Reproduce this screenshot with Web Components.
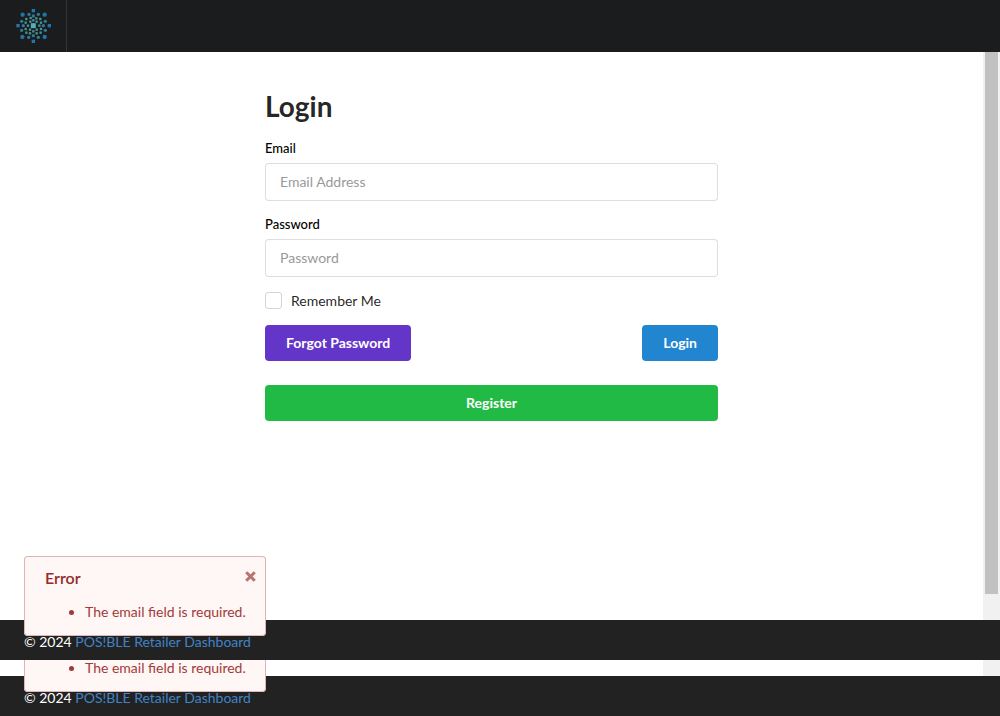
<!DOCTYPE html>
<html lang="en">
<head>
<meta charset="utf-8">
<meta name="viewport" content="width=device-width, initial-scale=1">
<title>Login</title>
<style>
  body { margin: 0; background: #fff; color: rgba(0,0,0,.87); font: 14px/20px Lato, "Liberation Sans", sans-serif; }
</style>
</head>
<body>
<dashboard-page></dashboard-page>
<script>
const define = (name, html, setup) => customElements.define(name, class extends HTMLElement {
  constructor() {
    super();
    const root = this.attachShadow({ mode: 'open' });
    const template = document.createElement('template');
    template.innerHTML = html;
    root.append(template.content.cloneNode(true));
  }
  connectedCallback() { if (setup) setup(this, this.shadowRoot); }
});

// Rings of dots around the central square: [x, y, size, colour, rounded]
const dots = [
  [100,77,15,'#55acbd'],
  ...[[100,32],[100,124],[54,77],[148,77]].map(p => [...p,10,'#2076a8']),
  ...[[68,44],[134,44],[67,111],[134,111]].map(p => [...p,13,'#2174a3','r']),
  ...[[87,43],[115,43],[65,64],[136,64],[65,91],[136,91],[86,112],[115,112],[100,48],[100,107],[70,77],[130,77]].map(p => [...p,10,'#2f7c99','r']),
  ...[[79,57],[121,57],[92,54],[109,55],[77,68],[123,68],[77,87],[123,87],[79,98],[122,98],[91,65],[110,65],[90,100],[110,100],[100,61],[100,94],[84,77],[118,77],[90,89],[110,89]].map(p => [...p,7,'#429599'])
].map(([x,y,s,c,r]) => `<rect x="${x-s/2}" y="${y-s/2}" width="${s}" height="${s}" fill="${c}"${r ? ` rx="${s/2}"` : ''}/>`).join('');

define('top-bar', `
<style>
  :host { display: block; background: #1b1c1d; }
  nav { display: flex; min-height: 52px; }
  a { display: flex; align-items: center; padding: 0 13px; border-right: 1px solid #323334; }
  svg { display: block; width: 40px; height: 40px; }
</style>
<nav><a href="#" aria-label="Home"><svg viewBox="39 18 120 120" aria-hidden="true">${dots}</svg></a></nav>`);

define('text-field', `
<style>
  :host { display: block; }
  label { display: block; margin-bottom: 6px; font-size: 13px; line-height: 18px; font-weight: 500; color: #000; }
  input { display: block; box-sizing: border-box; width: 100%; height: 38px; margin: 0; padding: 0 14px 2px;
    border: 1px solid rgba(34,36,38,.15); border-radius: 4px; background: #fff; color: inherit; font: inherit; outline: none; }
  input:focus { border-color: #85b7d9; }
  input::placeholder { color: #999; opacity: 1; }
</style>
<label for="field"></label><input id="field">`, (el, root) => {
  root.querySelector('label').textContent = el.getAttribute('label');
  const input = root.querySelector('input');
  input.type = el.getAttribute('type');
  input.placeholder = el.getAttribute('placeholder');
});

define('check-field', `
<style>
  :host { display: block; }
  label { display: flex; align-items: flex-start; gap: 9px; }
  input { appearance: none; box-sizing: border-box; width: 17px; height: 17px; margin: 1px 0 0; border: 1px solid #d4d4d5; border-radius: 3px; background: #fff; }
  input:checked { background: #2185d0; }
</style>
<label><input type="checkbox"><slot></slot></label>`);

define('action-button', `
<style>
  :host { display: block; }
  button { width: 100%; min-height: 36px; margin: 0; padding: 0 21px; border: 0; border-radius: 4px;
    background: var(--fill); color: #fff; font: inherit; font-weight: 700; cursor: pointer; }
</style>
<button type="button"><slot></slot></button>`);

define('login-form', `
<style>
  :host { display: block; width: 100%; max-width: 453px; padding: 36px 16px 48px; }
  form { display: flex; flex-direction: column; gap: 14px; }
  h1 { margin: 0 0 1px; font-size: 28px; line-height: 36px; font-weight: 700; }
  .row { display: flex; justify-content: space-between; }
  .register { margin-top: 10px; --fill: #21ba45; }
</style>
<form>
  <h1>Login</h1>
  <text-field label="Email" type="email" placeholder="Email Address"></text-field>
  <text-field label="Password" type="password" placeholder="Password"></text-field>
  <check-field>Remember Me</check-field>
  <div class="row">
    <action-button style="--fill: #6435c9">Forgot Password</action-button>
    <action-button style="--fill: #2185d0">Login</action-button>
  </div>
  <action-button class="register">Register</action-button>
</form>`);

define('error-message', `
<style>
  :host { display: block; box-sizing: border-box; padding: 12px 20px 14px 21px; border-radius: 4px;
    background: #fff6f6; box-shadow: inset 0 0 0 1px #e0b4b4; color: #9f3a38; white-space: nowrap; }
  header { display: flex; justify-content: space-between; align-items: flex-start; min-height: 20px; margin-bottom: 14px; }
  :host([untitled]) header > * { display: none; }
  h2 { margin: 0; color: #912d2b; font-size: 16px; line-height: 20px; font-weight: 600; }
  button { display: flex; margin: 0 -10px 0 0; padding: 3px 0; border: 0; background: none; color: inherit; opacity: .7; cursor: pointer; }
  svg { display: block; width: 11px; height: 11px; }
  ul { margin: 0; padding-left: 40px; }
</style>
<header>
  <h2>Error</h2>
  <button type="button" aria-label="Close"><svg viewBox="0 0 11 11"><path d="M2.3 2.3 8.7 8.7M8.7 2.3 2.3 8.7" stroke="currentColor" stroke-width="3" stroke-linecap="square"/></svg></button>
</header>
<ul><li><slot></slot></li></ul>`);

define('page-footer', `
<style>
  :host { display: block; box-sizing: border-box; min-height: 40px; padding: 12px 24px 8px; background: #222; color: #fff; }
  a { color: #4183c4; text-decoration: none; }
</style>
&copy; 2024 <a href="#">POS!BLE Retailer Dashboard</a>`);

define('page-view', `
<style>
  :host { position: relative; display: flex; flex-direction: column; }
  .body { flex: 1; display: flex; }
  main { flex: 1; display: flex; justify-content: center; }
  .track { width: 17px; box-sizing: border-box; padding: 0 2px; background: #f1f1f1; }
  .thumb { height: var(--thumb, 0%); background: #c1c1c1; }
  error-message { position: absolute; left: 24px; bottom: 24px; }
</style>
<slot name="top"></slot>
<div class="body"><main><slot></slot></main><div class="track"><div class="thumb"></div></div></div>
<page-footer></page-footer>
<error-message>The email field is required.</error-message>`, (el, root) => {
  root.querySelector('error-message').toggleAttribute('untitled', el.hasAttribute('untitled'));
});

define('dashboard-page', `
<style>
  :host { display: flex; flex-direction: column; min-height: 100vh; }
  .full { flex: 1; --thumb: 95.4%; }
  .tail { overflow: hidden; }
  .spacer { height: 16px; }
</style>
<page-view class="full"><top-bar slot="top"></top-bar><login-form></login-form></page-view>
<page-view class="tail" untitled><div class="spacer"></div></page-view>`);
</script>
</body>
</html>
